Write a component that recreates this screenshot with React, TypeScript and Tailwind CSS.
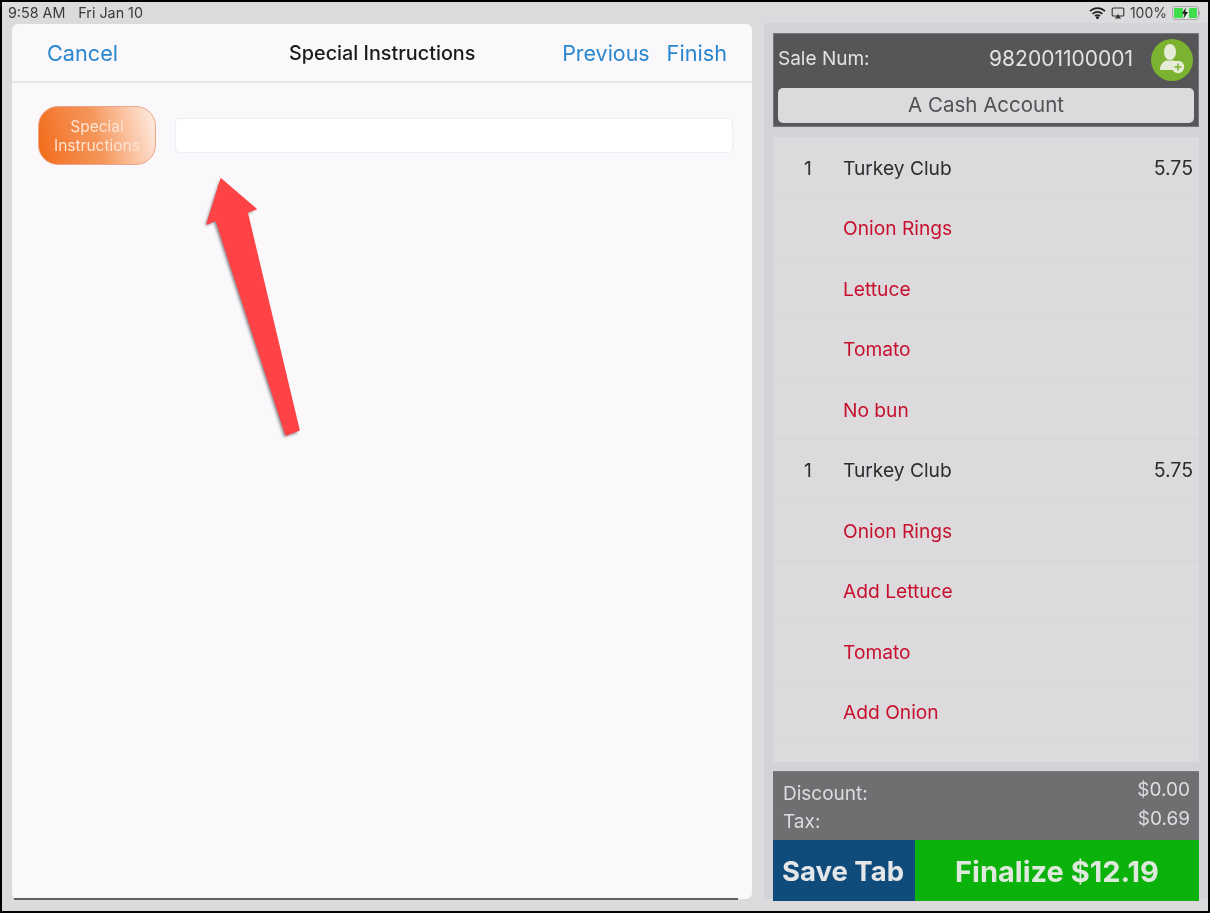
const font = { fontFamily: "Inter, sans-serif" };

const rows = [
  { qty: "1", name: "Turkey Club", price: "5.75" },
  { name: "Onion Rings" },
  { name: "Lettuce" },
  { name: "Tomato" },
  { name: "No bun" },
  { qty: "1", name: "Turkey Club", price: "5.75" },
  { name: "Onion Rings" },
  { name: "Add Lettuce" },
  { name: "Tomato" },
  { name: "Add Onion" },
];

function StatusBar() {
  return (
    <div className="h-[21px] flex items-center justify-between pl-[6px] pr-[8px] text-[14.3px] text-[#3a3a3c]">
      <div className="flex gap-[13px]">
        <span>9:58 AM</span>
        <span>Fri Jan 10</span>
      </div>
      <div className="flex items-center gap-[5px]">
        <svg width="17" height="12" viewBox="0 0 17 12" fill="none" stroke="#222" strokeWidth="1.8">
          <path d="M1 4.2a10.6 10.6 0 0 1 15 0" />
          <path d="M3.6 6.8a7 7 0 0 1 9.8 0" />
          <path d="M6.1 9.1a3.4 3.4 0 0 1 4.8 0" />
          <circle cx="8.5" cy="10.6" r="0.6" fill="#222" />
        </svg>
        <svg width="14" height="12" viewBox="0 0 13 12" fill="none">
          <rect x="0.7" y="1" width="11.6" height="8" rx="1" stroke="#333" strokeWidth="1.1" />
          <path d="M3.5 11.5 6.5 7l3 4.5z" fill="#333" />
        </svg>
        <span className="text-[14px]">100%</span>
        <div className="flex items-center">
          <div className="relative w-[27px] h-[14px] rounded-[3px] border border-[#a9a9a9] p-[1px] flex gap-[1px]">
            <div className="flex-1 bg-[#3fdc4c] rounded-[1px]" />
            <div className="w-[4px] bg-[#d9ecd9]" />
            <div className="flex-1 bg-[#3fdc4c] rounded-[1px]" />
            <svg className="absolute left-[8px] top-0" width="8" height="12" viewBox="0 0 8 11">
              <path d="M4.8 0 1 6.2h2.4L2.6 11 7 4.4H4.4z" fill="#1c1c1c" />
            </svg>
          </div>
          <div className="w-[1px] h-[4px] bg-[#a9a9a9]" />
        </div>
      </div>
    </div>
  );
}

// annotation arrow drawn over the screen, coordinates are the page's own
function Arrow() {
  return (
    <svg className="absolute left-[201px] top-[173px]" width="104" height="266" viewBox="203 175 104 266">
      <polygon
        points="221,180 256,209 247,212 299,431 286,435 216,220 207,224"
        fill="#55555a"
        opacity="0.7"
        transform="translate(-2 2)"
        style={{ filter: "blur(1.5px)" }}
      />
      <polygon
        points="221,179 256,209 247,212 299,430 286,435 216,220 207,224"
        fill="#fe4346"
        stroke="#fe4346"
        strokeWidth="1.5"
        strokeLinejoin="round"
      />
    </svg>
  );
}

function LeftCard() {
  return (
    <div className="w-[740px] ml-[10px] mt-[1px] rounded-[6px] bg-[#faf8fb] flex flex-col">
      <div className="h-[59px] pt-[2px] flex items-center justify-between pl-[35px] pr-[25px] border-b-2 border-[#e6e5e8] relative">
        <span className="text-[21.7px] text-[#2b86d0]">Cancel</span>
        <span className="absolute left-[277px] text-[19.8px] font-medium text-[#1a1a1a]">Special Instructions</span>
        <div className="flex gap-[17px] text-[21.7px] text-[#2b86d0]">
          <span className="text-[21.4px]">Previous</span>
          <span>Finish</span>
        </div>
      </div>
      <div className="flex items-center gap-[19px] pl-[26px] pr-[19px] pt-[23px]">
        <div className="w-[118px] h-[59px] shrink-0 rounded-[20px] border border-[#eba588] bg-linear-75 from-[#f26a0c] via-[#f4975a] to-[#fdeee6] flex items-center justify-center text-center text-[15.5px] leading-[19px] text-[#fde3d2]">
          Special
          <br />
          Instructions
        </div>
        <div className="flex-1 h-[35px] bg-white border border-[#eeedf1] rounded-[5px]" />
      </div>
      <div className="mt-auto -mb-[1px] ml-[2px] mr-[14px] h-[2px] bg-[#5f5f62]" />
    </div>
  );
}

function RightPanel() {
  return (
    <div className="ml-[12px] flex-1 bg-[#d3d2d8] px-[9px] pt-[10px] flex flex-col">
      <div className="h-[94px] shrink-0 bg-[#565557] border border-[#77767a] px-[4px] flex flex-col">
        <div className="flex items-center h-[54px] pb-[2px] text-[#e3e2e4]">
          <span className="text-[19px] -mt-[2px]">Sale Num:</span>
          <span className="ml-auto text-[21px] -mt-[2px]">982001100001</span>
          <div className="ml-[18px] mr-[1px] w-[42px] h-[42px] rounded-full bg-[#7bb330] flex items-center justify-center">
            <svg width="32" height="32" viewBox="0 0 32 32" fill="#e6ecd8">
              <ellipse cx="14" cy="8" rx="6" ry="8" />
              <path d="M4 26c0-6 3.5-8 6-9.5h8c2 1 3 1.8 4 3-3 1-5 3-5 6.5z" />
              <circle cx="22" cy="23" r="6.2" />
              <path d="M22 19.5v7M18.5 23h7" stroke="#7bb330" strokeWidth="1.5" />
            </svg>
          </div>
        </div>
        <div className="h-[35px] bg-[#dcdadd] rounded-[5px] flex items-center justify-center text-[20.5px] text-[#525154]">
          A Cash Account
        </div>
      </div>
      <div className="mt-[10px] h-[625px] shrink-0 bg-[#dcdadd] flex flex-col">
        {rows.map((r, i) => (
          <div key={i} className="h-[60.5px] pt-[3px] shrink-0 flex items-center border-b border-[#d6d5d8] text-[19.2px]">
            <span className="w-[70px] pl-[31px] text-[#2c2c2e]">{r.qty}</span>
            <span className={r.qty ? "text-[#2c2c2e]" : "text-[#c7102e]"}>{r.name}</span>
            {r.price && <span className="ml-auto pr-[6px] text-[19.5px] text-[#2c2c2e]">{r.price}</span>}
          </div>
        ))}
      </div>
      <div className="mt-[9px] h-[69px] shrink-0 bg-[#6f6e71] border-t border-[#7d7c80] pl-[10px] pr-[9px] flex justify-between text-[19px] text-[#dddcdf]">
        <div className="flex flex-col pt-[7.5px] leading-[28px]">
          <span>Discount:</span>
          <span>Tax:</span>
        </div>
        <div className="flex flex-col items-end pt-[4px] leading-[28.5px]">
          <span>$0.00</span>
          <span>$0.69</span>
        </div>
      </div>
      <div className="h-[61px] shrink-0 flex font-bold text-[#e4e6e8]">
        <div className="w-[142px] pt-[3px] pr-[2px] bg-[#0f4c7c] flex items-center justify-center text-[27.5px]">Save Tab</div>
        <div className="flex-1 pt-[3px] bg-[#0bb20b] flex items-center justify-center text-[29px] text-[#dfe8dc]">
          Finalize $12.19
        </div>
      </div>
    </div>
  );
}

export default function App() {
  return (
    <div style={font} className="relative w-[1210px] h-[913px] border-2 border-black bg-[#dcdadd] flex flex-col overflow-hidden blur-[0.4px]">
      <StatusBar />
      <div className="flex flex-1 min-h-0 pb-[12px]">
        <LeftCard />
        <RightPanel />
      </div>
      <Arrow />
    </div>
  );
}
